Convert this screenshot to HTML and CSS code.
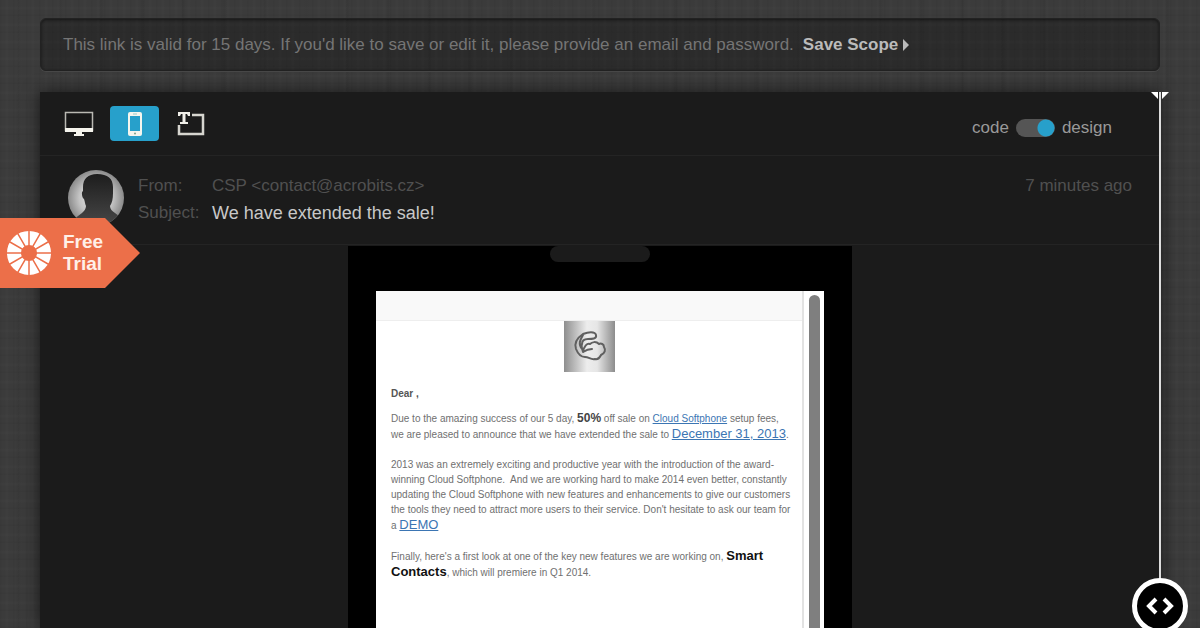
FILE: index.html
```
<!DOCTYPE html>
<html lang="en">
<head>
<meta charset="utf-8">
<meta name="viewport" content="width=device-width, initial-scale=1.0">
<title>We have extended the sale!</title>
<link rel="stylesheet" href="styles.css">
</head>
<body>
<div class="page">
    <div class="notice">
        <span>This link is valid for 15 days. If you'd like to save or edit it, please provide an email and password.</span>
        <a class="save" href="#">Save Scope<svg width="6" height="12" viewBox="0 0 6 12"><path d="M0 0 6 6 0 12z" fill="currentColor"/></svg></a>
    </div>

    <main class="panel">
        <div class="toolbar">
            <div class="views">
                <button class="view" type="button" aria-label="Desktop">
                    <svg width="30" height="26" viewBox="0 0 30 26"><path d="M1.500 1.500h27v18h-27z" fill="#161616" stroke="#b9b8b2" stroke-width="1.500"/><path d="M1 17h28v4H1z" fill="#f4f3ec"/><path d="M12 21h6v2h2v2H10v-2h2z" fill="#f4f3ec"/></svg>
                </button>
                <button class="view active" type="button" aria-label="Mobile">
                    <svg width="14" height="26" viewBox="0 0 14 26"><rect y="1" width="14" height="24" rx="2" fill="#f4f5ee"/><path d="M2 5h10v15H2z" fill="#27a0cb"/><path d="M5 3h4" stroke="#9cc"/><circle cx="7" cy="22.500" r="1" fill="#7ba08a"/></svg>
                </button>
                <button class="view" type="button" aria-label="Text only">
                    <svg width="28" height="26" viewBox="0 0 28 26"><path d="M15 4h11v19H2v-9" fill="none" stroke="#d6d5cf" stroke-width="2.500"/><path d="M1 1h12v4h-2l-1-2H8.500v8H11v2H3v-2h2.500V3H4L3 5H1z" fill="#f0efe9"/></svg>
                </button>
            </div>
            <label class="mode">
                <span>code</span>
                <input class="switch" type="checkbox" checked>
                <span>design</span>
            </label>
        </div>

        <div class="message">
            <svg class="avatar" width="56" height="56" viewBox="0 0 56 56">
                <defs>
                    <radialGradient id="light"><stop offset="0" stop-color="#eee"/><stop offset=".6" stop-color="#c4c4c4"/><stop offset="1" stop-color="#8a8a8a"/></radialGradient>
                    <linearGradient id="person" x2="0" y2="1"><stop offset="0" stop-color="#1d1d1d"/><stop offset="1" stop-color="#4b4b4b"/></linearGradient>
                    <clipPath id="round"><circle cx="28" cy="28" r="28"/></clipPath>
                </defs>
                <g clip-path="url(#round)">
                    <path d="M0 0h56v56H0z" fill="url(#light)"/>
                    <path d="M29 4c-9 0-14 5-14 13v4c-2 1-1 7 1 8 1 3 1 5 2 7 0 3-2 5-4 7-4 3-8 6-11 9v8h54v-8c-3-4-6-6-10-9-3-2-5-4-5-7 2-3 3-7 3-13v-6c0-8-5-13-16-13z" fill="url(#person)"/>
                </g>
            </svg>
            <dl class="fields">
                <dt>From:</dt>
                <dd>CSP &lt;contact@acrobits.cz&gt;</dd>
                <dt>Subject:</dt>
                <dd class="subject">We have extended the sale!</dd>
            </dl>
            <span class="time">7 minutes ago</span>
        </div>

        <div class="phone">
            <div class="speaker"></div>
            <div class="screen">
                <article class="mail">
                    <div class="preheader"></div>
                    <svg class="logo" width="51" height="51" viewBox="0 0 51 51">
                        <defs><linearGradient id="metal"><stop offset="0" stop-color="#8e8e8e"/><stop offset=".45" stop-color="#ededed"/><stop offset=".65" stop-color="#e6e6e6"/><stop offset="1" stop-color="#8c8c8c"/></linearGradient></defs>
                        <path d="M0 0h51v51H0z" fill="url(#metal)"/>
                        <path d="M24 18C28 18 33 18 32 14C31 10 24 11 19 13C13 17 10 22 12 28C14 33 17 36 21 36C25 36 27 39 31 38C35 39 36 36 37 34C41 32 42 29 40 26C40 23 37 22 35 23C32 20 28 21 26 23C23 22 20 25 19 31C18 28 17 25 18 23C18 20 20 18 24 18M28 28C24 28 22 29 19 31M19 14C16 19 14 23 18 28" fill="none" stroke="#606060" stroke-width="2" stroke-linejoin="round" stroke-linecap="round"/>
                    </svg>
                    <div class="copy">
                        <p class="dear"><b>Dear ,</b></p>
                        <p>Due to the amazing success of our 5 day, <strong class="percent">50%</strong> off sale on <a href="#">Cloud Softphone</a> setup fees,<br>
                        we are pleased to announce that we have extended the sale to <a class="large" href="#">December 31, 2013</a>.</p>
                        <p>2013 was an extremely exciting and productive year with the introduction of the award-<br>
                        winning Cloud Softphone.&nbsp; And we are working hard to make 2014 even better, constantly<br>
                        updating the Cloud Softphone with new features and enhancements to give our customers<br>
                        the tools they need to attract more users to their service. Don't hesitate to ask our team for<br>
                        a <a class="large" href="#">DEMO</a></p>
                        <p>Finally, here's a first look at one of the key new features we are working on, <strong>Smart<br>
                        Contacts</strong>, which will premiere in Q1 2014.</p>
                    </div>
                </article>
                <div class="scrollbar"><div class="thumb"></div></div>
            </div>
        </div>

        <div class="divider">
            <svg class="grip" width="20" height="8" viewBox="0 0 20 8"><path d="M1 0h7v7zM12 0h7l-7 7z" fill="#fff"/></svg>
            <button class="handle" type="button" aria-label="Show code">
                <svg width="30" height="20" viewBox="0 0 30 20"><path d="m11 3-7 7 7 7M19 3l7 7-7 7" fill="none" stroke="#fff" stroke-width="4"/></svg>
            </button>
        </div>
    </main>
</div>

<a class="trial" href="#">
    <svg width="44" height="44" viewBox="-22 -22 44 44">
        <circle r="15" fill="none" stroke="#fff" stroke-width="14"/>
        <path d="M0-23V23M-23 0H23M-11.500-19.900 11.500 19.900M-19.900-11.500 19.900 11.500M-19.900 11.500 19.900-11.500M-11.500 19.900 11.500-19.900" stroke="#ec6f49" stroke-width="1.500"/>
    </svg>
    <span>Free<br>Trial</span>
</a>
</body>
</html>
```
FILE: styles.css
```
* {
    box-sizing: border-box;
}

body {
    margin: 0;
    color: #777;
    font-family: "Liberation Sans", Arial, sans-serif;
    font-size: 17px;
    background-color: #3b3b3b;
    background-image:
        repeating-linear-gradient(90deg, rgba(0,0,0,.04) 0, transparent 3px 5px, rgba(255,255,255,.015) 7px, transparent 9px 13px),
        repeating-linear-gradient(0deg, rgba(0,0,0,.04) 0, transparent 3px 6px, rgba(255,255,255,.015) 8px, transparent 10px 17px),
        repeating-linear-gradient(90deg, transparent 0 17px, rgba(0,0,0,.06) 19px, transparent 22px 41px);
}

a {
    color: inherit;
}

button {
    display: flex;
    align-items: center;
    justify-content: center;
    padding: 0;
    border: none;
    background: none;
}

.page {
    display: flex;
    flex-direction: column;
    gap: 21px;
    height: 100vh;
    padding: 18px 40px 0;
    overflow: hidden;
}

.notice {
    display: flex;
    flex-shrink: 0;
    align-items: center;
    gap: 9px;
    height: 53px;
    padding: 0 22px;
    border: 1px solid #222;
    border-radius: 6px;
    background: rgba(0,0,0,.26);
    box-shadow: inset 0 1px 3px rgba(0,0,0,.5), 0 1px 0 #484848;
    color: #757575;
}

.save {
    display: flex;
    align-items: center;
    gap: 5px;
    color: #bbb;
    font-weight: bold;
    text-decoration: none;
}

.panel {
    position: relative;
    display: flex;
    flex: 1;
    flex-direction: column;
    min-height: 0;
    background: #1b1b1b;
    box-shadow: 0 0 16px rgba(0,0,0,.6);
}

.toolbar {
    display: flex;
    flex-shrink: 0;
    justify-content: space-between;
    align-items: center;
    height: 64px;
    padding: 0 48px 0 14px;
    border-bottom: 1px solid #242424;
}

.views {
    display: flex;
    gap: 7px;
}

.view {
    width: 49px;
    height: 35px;
    border-radius: 4px;
}

.active {
    background: #27a0cb;
}

.mode {
    display: flex;
    align-items: center;
    gap: 7px;
    padding-top: 8px;
    color: #999;
}

.switch {
    appearance: none;
    width: 39px;
    height: 18px;
    margin: 0;
    border-radius: 9px;
    background: radial-gradient(circle at 9px 9px, #27a0cb 8px, transparent 9px) #555;
}

.switch:checked {
    background: radial-gradient(circle at 30px 9px, #27a0cb 8px, transparent 9px) #555;
}

.message {
    display: flex;
    flex-shrink: 0;
    gap: 14px;
    height: 89px;
    padding: 14px 28px 0;
    border-bottom: 1px solid #242424;
    color: #505050;
}

.fields {
    display: grid;
    grid-template-columns: 74px auto;
    grid-auto-rows: 27px;
    align-content: start;
    line-height: 32px;
    margin: 0;
}

.fields dd {
    margin: 0;
}

.fields .subject {
    color: #c8c8c8;
    font-size: 18px;
}

.time {
    margin-left: auto;
    line-height: 32px;
}

.phone {
    display: flex;
    flex: 1;
    flex-direction: column;
    align-items: center;
    gap: 29px;
    align-self: center;
    width: 504px;
    min-height: 0;
    margin-top: 1px;
    padding: 0 28px;
    background: #000;
}

.speaker {
    flex-shrink: 0;
    width: 100px;
    height: 16px;
    border-radius: 8px;
    background: #1b1b1b;
}

.screen {
    display: flex;
    flex: 1;
    width: 100%;
    min-height: 0;
    background: #fff;
}

.mail {
    flex: 1;
    display: flex;
    flex-direction: column;
    align-items: center;
    min-width: 0;
    color: #707070;
    font-size: 10px;
    line-height: 15px;
    white-space: nowrap;
}

.preheader {
    flex-shrink: 0;
    width: 100%;
    height: 30px;
    border-bottom: 1px solid #eee;
    background: #f9f9f9;
}

.logo {
    flex-shrink: 0;
}

.copy {
    width: 100%;
    padding: 14px 0 0 15px;
}

.copy p {
    margin: 0 0 15px;
}

.copy .dear {
    margin-bottom: 10px;
}

.copy b {
    color: #555;
}

.copy a {
    color: #3b75b3;
}

.copy .large {
    font-size: 13px;
}

.copy strong {
    color: #111;
    font-size: 13px;
}

.copy .percent {
    color: #444;
    font-size: 12px;
}

.scrollbar {
    display: flex;
    flex-shrink: 0;
    justify-content: center;
    width: 22px;
    padding-top: 4px;
    border-left: 2px solid #e2e2e2;
}

.thumb {
    width: 11px;
    border-radius: 6px 6px 0 0;
    background: #7f7f7f;
}

/* code / preview divider, lies over the right edge of the panel */
.divider {
    position: absolute;
    top: 0;
    right: -28px;
    bottom: -6px;
    display: flex;
    flex-direction: column;
    align-items: center;
    justify-content: space-between;
    width: 56px;
    background: linear-gradient(#ddd, #ddd) center / 2px 100% no-repeat;
}

.handle {
    width: 56px;
    height: 56px;
    border: 5px solid #fff;
    border-radius: 50%;
    background: #000;
}

.trial {
    position: absolute;
    top: 218px;
    left: 0;
    display: flex;
    align-items: center;
    gap: 12px;
    width: 140px;
    height: 70px;
    padding-left: 7px;
    background: #ec6f49;
    clip-path: polygon(0 0, 75% 0, 100% 50%, 75% 100%, 0 100%);
    color: #fff0e8;
    font-size: 19px;
    font-weight: bold;
    line-height: 22px;
    text-decoration: none;
}
```
